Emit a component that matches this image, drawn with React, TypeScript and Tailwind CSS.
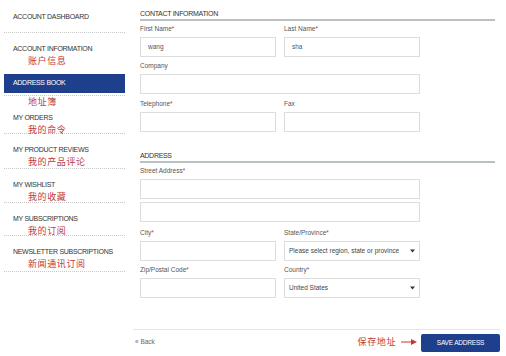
import React from 'react';

const cjk = "font-['Noto_Sans_CJK_SC',sans-serif]";

function NavItem({ label, zh, h = 'h-[34px]', pt = 'pt-[12px]' }: { label: string; zh?: string; h?: string; pt?: string }) {
  return (
    <div className={`${h} ${pt} pl-[9px] border-b border-dotted border-[#c8c8c8]`}>
      <div className="text-[7px] leading-[8px] tracking-[-0.3px] text-[#333]">{label}</div>
      {zh && <div className={`${cjk} text-[9px] leading-[12px] tracking-[0.6px] text-[#c0393b] pl-[15px] mt-[2px]`}>{zh}</div>}
    </div>
  );
}

function Label({ text, req }: { text: string; req?: boolean }) {
  return (
    <div className="text-[6.5px] leading-[8px] text-[#555] mb-[4px]">
      {text}
      {req && <span className="text-[#c0393b]">*</span>}
    </div>
  );
}

function Input({ value }: { value?: string }) {
  return (
    <div className="h-[20px] border border-[#dcdcdc] bg-white flex items-center pl-[7px] text-[6.5px] text-[#555]">
      {value}
    </div>
  );
}

function Select({ value }: { value: string }) {
  return (
    <div className="h-[20px] border border-[#dcdcdc] bg-white flex items-center justify-between pl-[4px] pr-[4px] text-[6.5px] text-[#444]">
      <span>{value}</span>
      <svg width="5" height="4" viewBox="0 0 5 4"><path d="M0 0.5 L5 0.5 L2.5 3.5 Z" fill="#333" /></svg>
    </div>
  );
}

function Section({ title }: { title: string }) {
  return (
    <div className="border-b-2 border-[#b9c0c4] pb-[1px] w-[355px]">
      <div className="text-[7px] leading-[8px] tracking-[-0.3px] text-[#333]">{title}</div>
    </div>
  );
}

export default function App() {
  return (
    <div className="w-[506px] h-[356px] bg-white overflow-hidden font-['Liberation_Sans',Arial,sans-serif] flex">
      {/* sidebar */}
      <div className="w-[121px] ml-[4px] flex flex-col">
        <NavItem label="ACCOUNT DASHBOARD" h="h-[33px]" pt="pt-[13px]" />
        <div className="h-[41px] pt-[12px] pl-[9px]">
          <div className="text-[7px] leading-[8px] tracking-[-0.3px] text-[#333]">ACCOUNT INFORMATION</div>
          <div className={`${cjk} text-[9px] leading-[12px] tracking-[0.6px] text-[#c0393b] pl-[15px] mt-[2px]`}>账户信息</div>
        </div>
        <div className="h-[19px] bg-[#1e3f8c] flex items-center pl-[9px] text-[7px] tracking-[-0.3px] text-white">ADDRESS BOOK</div>
        <div className="h-[41px] pt-[2px] border-b border-dotted border-[#c8c8c8]">
          <div className="border-t border-dotted border-[#c8c8c8]">
            <div className={`${cjk} text-[9px] leading-[12px] tracking-[0.6px] text-[#c0393b] pl-[24px]`}>地址簿</div>
          </div>
          <div className="pl-[9px] mt-[6px] text-[7px] leading-[8px] tracking-[-0.3px] text-[#333]">MY ORDERS</div>
          <div className={`${cjk} text-[9px] leading-[12px] tracking-[0.6px] text-[#c0393b] pl-[24px] mt-[2px]`}>我的命令</div>
        </div>
        <NavItem label="MY PRODUCT REVIEWS" zh="我的产品评论" h="h-[35px]" />
        <NavItem label="MY WISHLIST" zh="我的收藏" />
        <NavItem label="MY SUBSCRIPTIONS" zh="我的订阅" h="h-[33px]" />
        <NavItem label="NEWSLETTER SUBSCRIPTIONS" zh="新闻通讯订阅" h="h-[36px]" pt="pt-[12px]" />
      </div>

      {/* main */}
      <div className="ml-[15px] pt-[10px] flex flex-col">
        <Section title="CONTACT INFORMATION" />
        <div className="grid grid-cols-[136px_136px] gap-x-[8px] mt-[4px]">
          <div>
            <Label text="First Name" req />
            <Input value="wang" />
          </div>
          <div>
            <Label text="Last Name" req />
            <Input value="sha" />
          </div>
        </div>
        <div className="w-[280px] mt-[5px]">
          <Label text="Company" />
          <Input />
        </div>
        <div className="grid grid-cols-[136px_136px] gap-x-[8px] mt-[6px]">
          <div>
            <Label text="Telephone" req />
            <Input />
          </div>
          <div>
            <Label text="Fax" />
            <Input />
          </div>
        </div>

        <div className="mt-[20px]">
          <Section title="ADDRESS" />
        </div>
        <div className="w-[280px] mt-[4px]">
          <Label text="Street Address" req />
          <Input />
          <div className="mt-[3px]">
            <Input />
          </div>
        </div>
        <div className="grid grid-cols-[136px_136px] gap-x-[8px] mt-[7px]">
          <div>
            <Label text="City" req />
            <Input />
          </div>
          <div>
            <Label text="State/Province" req />
            <Select value="Please select region, state or province" />
          </div>
        </div>
        <div className="grid grid-cols-[136px_136px] gap-x-[8px] mt-[5px]">
          <div>
            <Label text="Zip/Postal Code" req />
            <Input />
          </div>
          <div>
            <Label text="Country" req />
            <Select value="United States" />
          </div>
        </div>

        <div className="-ml-[7px] w-[367px] mt-[31px] border-t border-[#e6e6e6] pt-[4px] flex items-center justify-between">
          <span className="text-[6.5px] text-[#666] pl-[2px] -mt-[3px]">« Back</span>
          <div className="flex items-center">
            <span className={`${cjk} text-[9px] tracking-[0.6px] text-[#c0393b] -mt-[3px]`}>保存地址</span>
            <svg width="16" height="6" viewBox="0 0 16 6" className="ml-[5px] mr-[4px] -mt-[2px]">
              <line x1="0" y1="3" x2="11" y2="3" stroke="#c0393b" strokeWidth="1" />
              <path d="M10 0 L16 3 L10 6 Z" fill="#c0393b" />
            </svg>
            <div className="w-[79px] h-[18px] bg-[#1e3f8c] rounded-[2px] flex items-center justify-center text-[6.5px] text-white tracking-[-0.2px]">SAVE ADDRESS</div>
          </div>
        </div>
      </div>
    </div>
  );
}
